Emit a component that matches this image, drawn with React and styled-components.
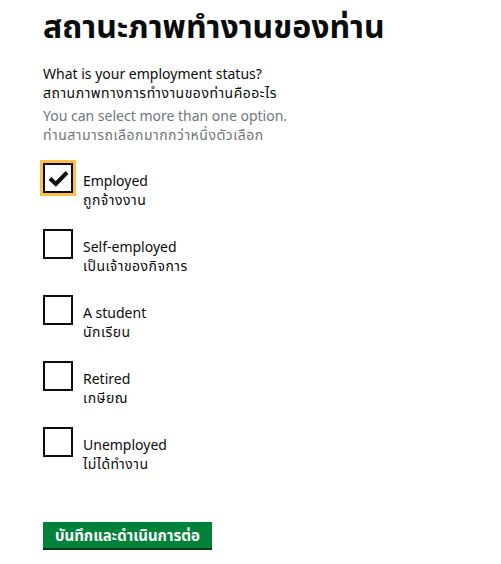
import React from "react";
import styled, { createGlobalStyle } from "styled-components";

const FONT = `"Noto Sans", "Liberation Sans", "Noto Sans Thai", "DejaVu Sans", sans-serif`;

const GlobalStyle = createGlobalStyle`
  body {
    margin: 0;
    background: #ffffff;
    font-family: ${FONT};
    color: #0b0c0c;
  }
`;

const OPTIONS = [
  { en: "Employed", th: "ถูกจ้างงาน", checked: true },
  { en: "Self-employed", th: "เป็นเจ้าของกิจการ" },
  { en: "A student", th: "นักเรียน" },
  { en: "Retired", th: "เกษียณ" },
  { en: "Unemployed", th: "ไม่ได้ทำงาน" },
];

const App = () => {
  return (
    <>
      <GlobalStyle />
      <Page>
        <Heading>สถานะภาพทำงานของท่าน</Heading>
        <Question>
          What is your employment status?
          <br />
          <Thai>สถานภาพทางการทำงานของท่านคืออะไร</Thai>
        </Question>
        <Hint>
          You can select more than one option.
          <br />
          <Thai>ท่านสามารถเลือกมากกว่าหนึ่งตัวเลือก</Thai>
        </Hint>
        <List>
          {OPTIONS.map((o) => (
            <Item key={o.en}>
              <Box $focused={o.checked}>
                {o.checked && (
                  <svg width="21" height="17" viewBox="0 0 21 17">
                    <path
                      d="M2 8.5 L7.8 14 L19 2.5"
                      fill="none"
                      stroke="#0b0c0c"
                      strokeWidth="4"
                    />
                  </svg>
                )}
              </Box>
              <Label>
                {o.en}
                <br />
                <Thai>{o.th}</Thai>
              </Label>
            </Item>
          ))}
        </List>
        <Button>บันทึกและดำเนินการต่อ</Button>
      </Page>
    </>
  );
};

const Page = styled.div`
  padding: 7px 43px 10px;
`;

const Heading = styled.h1`
  margin: 0 0 19px;
  font-size: 32px;
  line-height: 38px;
  font-weight: 700;
`;

const Thai = styled.span`
  letter-spacing: 0.5px;
`;

const Question = styled.p`
  margin: 0 0 4px;
  font-size: 14px;
  line-height: 19px;
`;

const Hint = styled.p`
  margin: 0 0 19px;
  font-size: 14px;
  line-height: 19px;
  color: #6f777b;
`;

const List = styled.div`
  display: flex;
  flex-direction: column;
  gap: 20px;
`;

const Item = styled.div`
  display: flex;
  align-items: flex-start;
  gap: 10px;
`;

const Box = styled.div`
  width: 30px;
  height: 30px;
  box-sizing: border-box;
  border: 2px solid #0b0c0c;
  display: flex;
  align-items: center;
  justify-content: center;
  flex-shrink: 0;
  box-shadow: ${(p) => (p.$focused ? "0 0 0 3px #ffbf47" : "none")};
`;

const Label = styled.div`
  padding-top: 8px;
  font-size: 14px;
  line-height: 19px;
`;

const Button = styled.button`
  margin-top: 49px;
  display: block;
  border: 0;
  padding: 4px 12px 3px;
  background: #00823b;
  color: #ffffff;
  font-family: ${FONT};
  font-size: 15px;
  font-weight: 700;
  line-height: 19px;
  box-shadow: 0 2px 0 #003618;
  cursor: pointer;
`;

export default App;
